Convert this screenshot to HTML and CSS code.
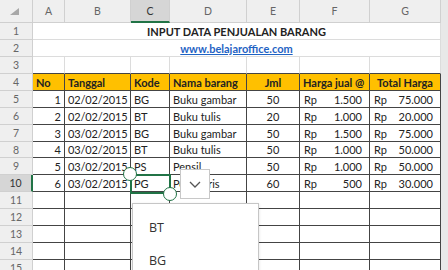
FILE: index.html
```html
<!DOCTYPE html>
<html>
<head>
<meta charset="utf-8">
<link rel="stylesheet" href="styles.css">
</head>
<body>
<div class="sheet">
  <div class="grid">
    <div class="corner"><svg width="10" height="7" viewBox="0 0 10 7"><polygon points="9,0 9,7 0,7" fill="#a8a8a8"/></svg></div>
    <div class="ch">A</div><div class="ch">B</div><div class="ch sel">C</div><div class="ch">D</div><div class="ch">E</div><div class="ch">F</div><div class="ch">G</div><div class="ch edge"></div>

    <div class="rh">1</div><div class="title">INPUT DATA PENJUALAN BARANG</div><div class="edge"></div>
    <div class="rh">2</div><div class="title link"><span>www.belajaroffice.com</span></div><div class="edge"></div>
    <div class="rh">3</div><div class="top"></div><div class="top"></div><div class="top"></div><div class="top"></div><div class="top"></div><div class="top"></div><div class="top"></div><div class="edge"></div>

    <div class="rh">4</div><div class="t hd">No</div><div class="t hd">Tanggal</div><div class="t hd">Kode</div><div class="t hd">Nama barang</div><div class="t hd ctr">Jml</div><div class="t hd">Harga jual @</div><div class="t hd ctr">Total Harga</div><div class="edge"></div>

    <div class="rh">5</div><div class="t r">1</div><div class="t date">02/02/2015</div><div class="t">BG</div><div class="t">Buku gambar</div><div class="t ctr">50</div><div class="t money"><span>Rp</span><span>1.500</span></div><div class="t money"><span>Rp</span><span>75.000</span></div><div class="edge"></div>
    <div class="rh">6</div><div class="t r">2</div><div class="t date">02/02/2015</div><div class="t">BT</div><div class="t">Buku tulis</div><div class="t ctr">20</div><div class="t money"><span>Rp</span><span>1.000</span></div><div class="t money"><span>Rp</span><span>20.000</span></div><div class="edge"></div>
    <div class="rh">7</div><div class="t r">3</div><div class="t date">03/02/2015</div><div class="t">BG</div><div class="t">Buku gambar</div><div class="t ctr">50</div><div class="t money"><span>Rp</span><span>1.500</span></div><div class="t money"><span>Rp</span><span>75.000</span></div><div class="edge"></div>
    <div class="rh">8</div><div class="t r">4</div><div class="t date">03/02/2015</div><div class="t">BT</div><div class="t">Buku tulis</div><div class="t ctr">50</div><div class="t money"><span>Rp</span><span>1.000</span></div><div class="t money"><span>Rp</span><span>50.000</span></div><div class="edge"></div>
    <div class="rh">9</div><div class="t r">5</div><div class="t date">03/02/2015</div><div class="t">PS</div><div class="t">Pensil</div><div class="t ctr">50</div><div class="t money"><span>Rp</span><span>1.000</span></div><div class="t money"><span>Rp</span><span>50.000</span></div><div class="edge"></div>
    <div class="rh sel">10</div><div class="t r">6</div><div class="t date">03/02/2015</div><div class="t">PG</div><div class="t">Penggaris</div><div class="t ctr">60</div><div class="t money"><span>Rp</span><span>500</span></div><div class="t money"><span>Rp</span><span>30.000</span></div><div class="edge"></div>

    <div class="rh">11</div><div class="t"></div><div class="t"></div><div class="t"></div><div class="t"></div><div class="t"></div><div class="t"></div><div class="t"></div><div class="edge"></div>
    <div class="rh">12</div><div class="t"></div><div class="t"></div><div class="t"></div><div class="t"></div><div class="t"></div><div class="t"></div><div class="t"></div><div class="edge"></div>
    <div class="rh">13</div><div class="t"></div><div class="t"></div><div class="t"></div><div class="t"></div><div class="t"></div><div class="t"></div><div class="t"></div><div class="edge"></div>
    <div class="rh">14</div><div class="t"></div><div class="t"></div><div class="t"></div><div class="t"></div><div class="t"></div><div class="t"></div><div class="t"></div><div class="edge"></div>
    <div class="rh">15</div><div class="t"></div><div class="t"></div><div class="t"></div><div class="t"></div><div class="t"></div><div class="t"></div><div class="t"></div><div class="edge"></div>
  </div>

  <div class="selection"></div>
  <div class="handle handle-tl"></div>
  <div class="handle handle-br"></div>
  <div class="dd-button"><svg width="12" height="7" viewBox="0 0 12 7"><polyline points="1,1 6,6 11,1" fill="none" stroke="#555" stroke-width="1.3"/></svg></div>
  <div class="dd-list">
    <div class="dd-item">BT</div>
    <div class="dd-item">BG</div>
  </div>
</div>
</body>
</html>
```

FILE: styles.css
```css
html, body {
  margin: 0;
  background: #fff;
}
body {
  font-family: "Lato", "Open Sans", sans-serif;
  font-size: 11px;
  color: #222;
  overflow: hidden;
}
.sheet {
  position: relative;
  width: 448px;
  height: 270px;
  overflow: hidden;
}
.grid {
  display: grid;
  grid-template-columns: 33px 32px 66px 39px 77px 53px 70px 71px 7px;
  grid-template-rows: 23px repeat(7, 17px) 16px repeat(7, 17px);
}
.grid > div {
  box-sizing: border-box;
  border-right: 1px solid #dcdcdc;
  border-bottom: 1px solid #dcdcdc;
  display: flex;
  align-items: center;
  padding: 0 3px;
  white-space: nowrap;
  overflow: hidden;
}
.grid > .corner {
  background: #efefef;
  border-color: #cfcfcf;
  justify-content: flex-end;
  align-items: flex-end;
  padding: 0 12px 7px 0;
}
.grid > .ch {
  background: #efefef;
  border-color: #d0d0d0;
  color: #666;
  justify-content: center;
  font-size: 10.5px;
}
.grid > .ch.sel {
  background: #d6d6d6;
  border-bottom: 2px solid #217346;
  color: #333;
}
.grid > .rh {
  background: #efefef;
  border-color: #d0d0d0;
  color: #666;
  justify-content: center;
  font-size: 10.5px;
}
.grid > .rh.sel {
  background: #d6d6d6;
  border-right: 2px solid #217346;
  color: #333;
}
.grid > .edge {
  background: #e8e8e8;
  border-right: none;
  border-bottom-color: #e8e8e8;
  padding: 0;
}
.grid > .title {
  grid-column: 2 / span 7;
  justify-content: center;
  font-weight: 700;
}
.grid > .link span {
  color: #1f63c4;
  text-decoration: underline;
}
.grid > .top {
  border-bottom-color: #444;
}
.grid > .t {
  border-right-color: #444;
  border-bottom-color: #444;
}
.grid > .hd {
  background: #ffc000;
  font-weight: 700;
}
.grid > .date {
  padding: 0 1px 0 3px;
  letter-spacing: -0.15px;
}
.grid > .r { justify-content: flex-end; }
.grid > .ctr { justify-content: center; }
.grid > .money { justify-content: space-between; padding: 0 7px 0 4px; }

.selection {
  position: absolute;
  left: 130px;
  top: 174px;
  width: 37px;
  height: 16px;
  border: 2px solid #217346;
}
.handle {
  position: absolute;
  width: 12px;
  height: 12px;
  border: 1.6px solid #217346;
  border-radius: 50%;
  background: #fff;
}
.handle-tl { left: 123px; top: 167px; }
.handle-br { left: 163px; top: 187px; }
.dd-button {
  position: absolute;
  left: 180px;
  top: 169px;
  width: 28px;
  height: 28px;
  background: #fff;
  border: 1px solid #c8c8c8;
  display: flex;
  align-items: center;
  justify-content: center;
}
.dd-list {
  position: absolute;
  left: 132px;
  top: 203px;
  width: 125px;
  height: 80px;
  background: #fff;
  border: 1px solid #c6c6c6;
  box-shadow: 0 1px 3px rgba(0,0,0,0.12);
  padding-top: 7px;
}
.dd-item {
  height: 33px;
  display: flex;
  align-items: center;
  padding-left: 16px;
  font-family: "Open Sans", "Lato", sans-serif;
  font-size: 12.5px;
  color: #333;
}
```
